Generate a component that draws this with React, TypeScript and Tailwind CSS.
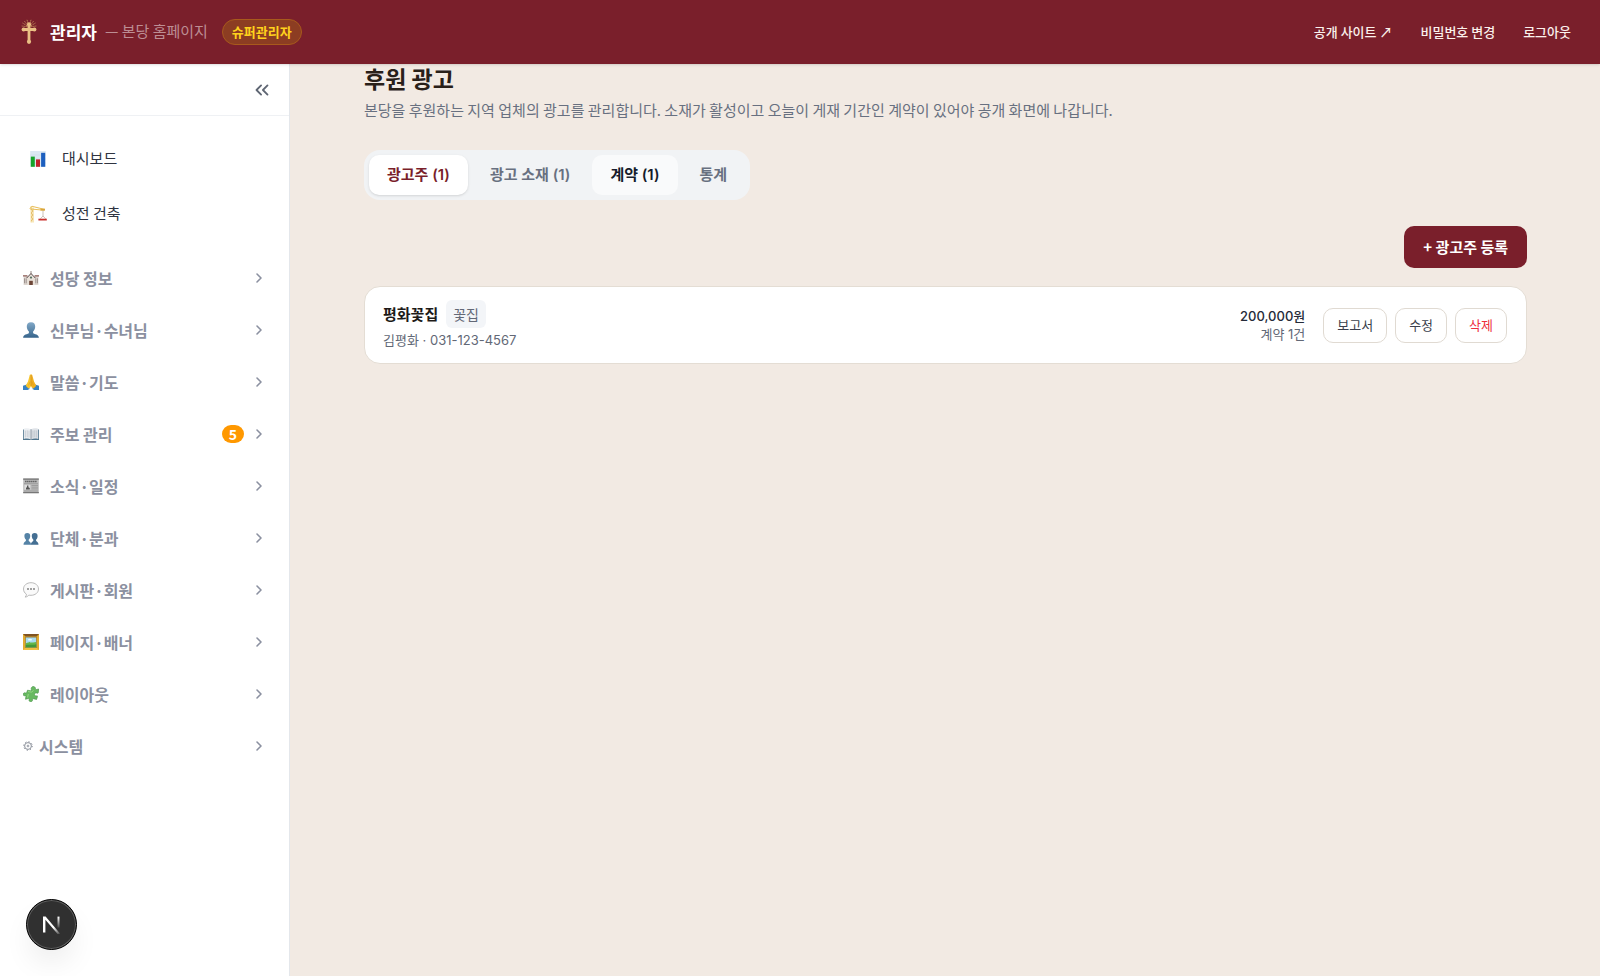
import React, { useState } from 'react';
import { ChevronRight, ChevronsLeft } from 'lucide-react';

const ChartIcon = () => (
    <svg viewBox="0 0 16 16" className="size-4" aria-hidden="true">
        <rect x="0.2" y="0" width="15.6" height="15.8" fill="#dce8f2" />
        <path d="M0 4h16M0 8h16M0 12h16" stroke="#c2d3e2" strokeWidth="0.4" />
        <rect x="0.8" y="5.6" width="4" height="10.2" fill="#17a32b" />
        <rect x="6" y="8.4" width="4" height="7.4" fill="#c3222c" />
        <rect x="11.1" y="1.8" width="4.1" height="14" fill="#1d5fbf" />
    </svg>
);

const CraneIcon = () => (
    <svg viewBox="0 0 18 18" className="size-[18px]" aria-hidden="true">
        <path d="M2.2 1v16.5M4 2.5v15" stroke="#ecc868" strokeWidth="0.9" fill="none" />
        <path d="M2.2 4l1.8 2-1.8 2 1.8 2-1.8 2 1.8 2-1.8 2" stroke="#dcae4c" strokeWidth="0.7" fill="none" />
        <path d="M0.8 3.6L3 1.3l13 3.2M1 3.9l14.5 1.4" stroke="#e8bd58" strokeWidth="1" fill="none" />
        <rect x="11.5" y="3.7" width="4.5" height="1.8" fill="#d9a53d" />
        <path d="M14 5.5v5.5M11.3 13.8l2.7-2.8 2.7 2.8" stroke="#b6a89a" strokeWidth="0.7" fill="none" />
        <rect x="9.4" y="13.7" width="8.4" height="1.8" fill="#c9302c" />
    </svg>
);

const ChurchIcon = () => (
    <svg viewBox="0 0 16 16" className="size-4" aria-hidden="true">
        <path d="M8 1v4" stroke="#8a7a72" strokeWidth="0.9" />
        <rect x="0.6" y="6.4" width="14.8" height="8.6" fill="#ddd5cf" />
        <path d="M0 5.2h4.4v1.400H0zM11.600 5.200H16v1.400h-4.400z" fill="#8a5850" />
        <path d="M4.2 7.8L8 3.6l3.8 4.2V15H4.2z" fill="#e9e1d9" />
        <path d="M3.7 8L8 3.5 12.3 8" stroke="#58484a" strokeWidth="1" fill="none" />
        <circle cx="8" cy="7.6" r="1.1" fill="#557263" />
        <rect x="6.2" y="10.8" width="3.6" height="4.2" fill="#6d4637" />
        <path d="M1.5 8.3v5M3.2 8.3v5M12.8 8.3v5M14.5 8.3v5" stroke="#8f8480" strokeWidth="0.8" />
    </svg>
);

const PersonIcon = () => (
    <svg viewBox="0 0 16 16" className="size-4" aria-hidden="true">
        <defs>
            <linearGradient id="bust" x1="0" y1="0" x2="0" y2="1">
                <stop offset="0" stopColor="#82a9c8" />
                <stop offset="1" stopColor="#36648b" />
            </linearGradient>
        </defs>
        <path d="M8 .2C4.900.2 3.700 2.100 3.800 4.600c0 2 .8 3.900 2.100 4.900v1.800C4.200 12.300.5 12.300.1 15.800h15.800c-.4-3.500-4.100-3.500-5.800-4.500V9.500c1.300-1 2.100-2.900 2.100-4.900C12.300 2.100 11.100.2 8 .2z" fill="url(#bust)" />
    </svg>
);

const PrayIcon = () => (
    <svg viewBox="0 0 16 16" className="size-4" aria-hidden="true">
        <path d="M0 11.8l4.6-1.600 2 4.800-2 1H0zM16 11.800l-4.600-1.600-2 4.800 2 1H16z" fill="#3681c4" />
        <path d="M7.900.3C7 .3 6.700 1 6.500 2L5 7.500 2.700 11.700l2.700 2.900c1.500-.4 2.500-1.500 2.600-3z" fill="#f8c52d" />
        <path d="M8.100.3c.9 0 1.200.7 1.400 1.700L11 7.500l2.300 4.200-2.700 2.900c-1.500-.4-2.500-1.500-2.600-3z" fill="#f2b01e" />
        <path d="M8 1v11" stroke="#c87c14" strokeWidth="0.6" />
        <path d="M5.500 11.500l1.700-4M10.500 11.500l-1.700-4" stroke="#dd961b" strokeWidth="0.6" />
    </svg>
);

const BookIcon = () => (
    <svg viewBox="0 0 16 16" className="size-4" aria-hidden="true">
        <path d="M0 3.500h16V14H0z" fill="#50758d" />
        <path d="M.8 2.800C3.500 2 6.200 2.200 8 3.500v9.900c-2-1-4.700-1-7.200-.5z" fill="#edf0f3" />
        <path d="M15.200 2.800C12.500 2 9.800 2.200 8 3.500v9.900c2-1 4.700-1 7.200-.5z" fill="#dfe3e8" />
        <path d="M8 3.500v10" stroke="#75828e" strokeWidth="0.8" />
        <path d="M2.300 4.500v7M4.200 4.300v7M6 4.600v7M10 4.600v7M11.800 4.300v7M13.700 4.500v7" stroke="#b5bbc4" strokeWidth="0.7" />
    </svg>
);

const NewsIcon = () => (
    <svg viewBox="0 0 16 16" className="size-4" aria-hidden="true">
        <rect x="0.2" y="0.5" width="15.6" height="14.7" fill="#bcbcbc" />
        <rect x="0.2" y="0.5" width="15.6" height="1.3" fill="#777" />
        <path d="M2 3.600h12" stroke="#666" strokeWidth="1.5" strokeDasharray="1.5 .4" />
        <path d="M1 5.700h14M8.500 7.500H15M8.500 9.200H15M8.500 10.900H15M1 13h14" stroke="#888" strokeWidth="0.6" />
        <rect x="1.5" y="6.8" width="5.8" height="4.8" fill="#dedede" />
        <path d="M3 11.500V9.800l1-.5V7.600h1.400v1.700l1.400.8v1.400z" fill="#555" />
        <path d="M.2 14h15.600v1.200H.2z" fill="#777" />
    </svg>
);

const PeopleIcon = () => (
    <svg viewBox="0 0 16 16" className="size-4" aria-hidden="true">
        <path d="M4.300 3C2.300 3 1.300 4.100 1.400 5.900c0 1.600.5 2.800 1.500 3.500v1.500C2 11.600.5 12 .5 14.800h7.600c0-2.800-1.500-3.200-2.400-3.900V9.400c1-.7 1.500-1.900 1.500-3.500C7.300 4.100 6.300 3 4.300 3z" fill="#5583a6" />
        <path d="M11.700 3c-2 0-3 1.100-2.900 2.900 0 1.600.5 2.800 1.500 3.500v1.500c-.9.7-2.400 1.100-2.400 3.900h7.600c0-2.800-1.500-3.200-2.400-3.900V9.400c1-.7 1.500-1.900 1.500-3.500.1-1.800-.9-2.900-2.900-2.900z" fill="#446f93" />
    </svg>
);

const SpeechIcon = () => (
    <svg viewBox="0 0 16 16" className="size-4" aria-hidden="true">
        <path d="M8 .7c4.300 0 7.500 2.700 7.500 6.300S12.300 13.300 8 13.300c-.8 0-1.500 0-2.200-.2-.7 1-2 1.900-3.600 2 .8-.8 1.200-1.700 1.200-2.900C1.600 11 .5 9.200.5 7 .5 3.400 3.700.7 8 .7z" fill="#fafafa" stroke="#aaa" strokeWidth="0.8" />
        <path d="M4.200 7h1.600M7.200 7h1.600M10.200 7h1.600" stroke="#666" strokeWidth="1.4" />
    </svg>
);

const FrameIcon = () => (
    <svg viewBox="0 0 16 16" className="size-4" aria-hidden="true">
        <rect width="16" height="16" fill="#e1ab2d" />
        <path d="M0 0h16l-2 2H2z" fill="#805322" />
        <path d="M0 16h16l-2-2H2z" fill="#efc043" />
        <rect x="2.2" y="2.2" width="11.6" height="11.6" fill="#9b722c" />
        <rect x="2.8" y="3.5" width="10.4" height="9.7" fill="#a8dcf0" />
        <ellipse cx="7" cy="5.7" rx="2" ry="0.9" fill="#eefaff" />
        <path d="M2.800 9.300c3-1.500 6-.3 10.400-1.300v5.200H2.800z" fill="#65b749" />
        <path d="M2.800 11c3-1 6 .5 10.400-.7v2.900H2.800z" fill="#42983a" />
    </svg>
);

const PuzzleIcon = () => (
    <svg viewBox="0 0 16 16" className="size-4" aria-hidden="true">
        <path
            d="M4.500 4.200l3.300.6c.7 0 .7-.6.5-1.200C7.800 2.200 8.500.8 10 .5c1.400-.2 2.500.8 2.500 2.200 0 .8.300 1.100 1 .8l2.200-.5-.4 3.600c-.2.800-.9.700-1.600.4-1.200-.4-2.200.3-2.200 1.500 0 1.100 1 1.700 2 1.400.7-.3 1.200-.1 1 .6l-.9 3-3.300-.8c-.8-.1-.9.4-.8 1.100.2 1.300-.8 2-1.900 1.900-1.200-.1-1.900-1.100-1.500-2.200.3-.8 0-1.200-.8-1l-2.800.8.4-2.900c.1-.7-.4-.9-1.100-.7C.8 10 0 9.200.2 8.100c.2-1 1.200-1.600 2.200-1.200.7.200 1.200.1 1.400-.6z"
            fill="#68b961"
            stroke="#458f47"
            strokeWidth="0.6"
        />
        <path d="M5 5.500l3.500.6 2-1.600M4.600 11.500l.7-3.500" stroke="#9bdb89" strokeWidth="0.9" fill="none" />
    </svg>
);

const GearIcon = () => (
    <svg viewBox="0 0 10 10" className="size-[10px]" fill="none" stroke="#7f8490" aria-hidden="true">
        <circle cx="5" cy="5" r="3.4" strokeWidth="0.9" />
        <circle cx="5" cy="5" r="4.3" strokeWidth="1" strokeDasharray="1.2 2.177" />
        <circle cx="5" cy="5" r="0.9" strokeWidth="0.8" />
    </svg>
);

const CrossLogo = () => (
    <svg viewBox="0 0 18 26" className="h-[26px] w-[18px]" aria-hidden="true">
        <path d="M9 8L2.500 4M9 8L4.500 2.200M9 8L7 .8M9 8L11 .8M9 8l4.500-5.800M9 8l6.500-4M9 8L1.700 7M9 8l7.300-1" stroke="#c08b5a" strokeWidth="0.9" strokeDasharray="1.5 .6" />
        <path d="M9 5v18M3.500 10.500h11" stroke="#eac085" strokeWidth="2.8" />
        <circle cx="9" cy="5.2" r="2" fill="#eac085" />
        <circle cx="3.6" cy="10.5" r="2" fill="#eac085" />
        <circle cx="14.4" cy="10.5" r="2" fill="#eac085" />
        <circle cx="9" cy="22.8" r="2.1" fill="#eac085" />
    </svg>
);

interface MenuGroup {
    label: string;
    icon: React.ReactNode;
    badge?: number;
}

const links = [
    { label: '대시보드', icon: <ChartIcon /> },
    { label: '성전 건축', icon: <CraneIcon /> },
];

const groups: MenuGroup[] = [
    { label: '성당 정보', icon: <ChurchIcon /> },
    { label: '신부님·수녀님', icon: <PersonIcon /> },
    { label: '말씀·기도', icon: <PrayIcon /> },
    { label: '주보 관리', icon: <BookIcon />, badge: 5 },
    { label: '소식·일정', icon: <NewsIcon /> },
    { label: '단체·분과', icon: <PeopleIcon /> },
    { label: '게시판·회원', icon: <SpeechIcon /> },
    { label: '페이지·배너', icon: <FrameIcon /> },
    { label: '레이아웃', icon: <PuzzleIcon /> },
    { label: '시스템', icon: <GearIcon /> },
];

const tabs = ['광고주 (1)', '광고 소재 (1)', '계약 (1)', '통계'];

const Header = () => (
    <header className="relative z-10 flex h-16 items-center justify-between bg-[#7a1f2b] pr-[29px] pb-px pl-5 text-white shadow-sm">
        <div className="flex items-center">
            <CrossLogo />
            <span className="ml-3 text-[17px] font-bold">관리자</span>
            <span className="ml-2 text-[15px] text-[#bd8e94]">— 본당 홈페이지</span>
            <span className="ml-3.5 flex h-[26px] items-center rounded-full border border-[#a85a1c] bg-[#8c3d22] px-[9px] text-[13px] font-bold text-[#ffd21c]">슈퍼관리자</span>
        </div>
        <nav className="flex gap-7 text-[13px] font-medium text-[#fbf1ec]">
            <a href="#site">공개 사이트 ↗</a>
            <a href="#password">비밀번호 변경</a>
            <button>로그아웃</button>
        </nav>
    </header>
);

const Sidebar = () => (
    <aside className="relative w-[290px] shrink-0 border-r border-[#e4e7eb] bg-white">
        <div className="flex h-[52px] items-center justify-end border-b border-[#eff1f4] pr-4">
            <button aria-label="메뉴 접기" className="text-[#5f6673]">
                <ChevronsLeft className="size-[22px]" strokeWidth={2} />
            </button>
        </div>
        <nav className="pt-[15px]">
            {links.map((link) => (
                <a key={link.label} href="#menu" className="flex h-[55px] items-center gap-[14px] pl-7 text-[15px] text-[#2f3441]">
                    <span className="flex w-5 justify-center">{link.icon}</span>
                    {link.label}
                </a>
            ))}
            <div className="pt-[11px]">
                {groups.map((group) => (
                    <button key={group.label} className="flex h-[52px] w-full items-center gap-[11px] pr-[22px] pl-[23px] text-[#8b90a0] last:gap-1.5">
                        {group.icon}
                        <span className="text-base font-bold">{group.label}</span>
                        <span className="ml-auto flex items-center gap-[7px]">
                            {group.badge && (
                                <span className="flex h-[18px] items-center rounded-full bg-[#ff9800] px-[7px] text-sm font-bold text-white">{group.badge}</span>
                            )}
                            <ChevronRight className="size-4" strokeWidth={2.4} />
                        </span>
                    </button>
                ))}
            </div>
        </nav>
        <button aria-label="Next.js" className="absolute bottom-[26px] left-[26px] flex size-[51px] items-center justify-center rounded-full border border-black bg-[#303030] shadow-[inset_0_0_0_1px_#606060,0_16px_32px_-8px_rgba(0,0,0,0.12)]">
            <svg viewBox="0 0 18 18" className="size-[18px]" fill="none" aria-hidden="true">
                <defs>
                    <linearGradient id="diag" x1="11" y1="11" x2="17" y2="18" gradientUnits="userSpaceOnUse">
                        <stop stopColor="#fff" />
                        <stop offset="1" stopColor="#fff" stopOpacity="0.1" />
                    </linearGradient>
                    <linearGradient id="stem" x1="15" y1="1" x2="15" y2="12" gradientUnits="userSpaceOnUse">
                        <stop stopColor="#fff" />
                        <stop offset="1" stopColor="#fff" stopOpacity="0.1" />
                    </linearGradient>
                </defs>
                <path d="M0 .6h2.600L17 17.600l-1.600 1.300L2.400 3.800V16.500H0z" fill="url(#diag)" />
                <path d="M15.500 .6v11" stroke="url(#stem)" strokeWidth="2" />
            </svg>
        </button>
    </aside>
);

const AdvertiserCard = () => (
    <article className="mt-[18px] flex items-center justify-between rounded-2xl border border-[#e4ddd4] bg-white py-2.5 pr-[19px] pl-[18px]">
        <div className="pt-[3px]">
            <div className="flex items-center gap-2">
                <h2 className="text-[15px] font-bold text-[#1d1a18]">평화꽃집</h2>
                <span className="rounded-md bg-[#f3f5f8] px-[7px] text-sm leading-7 text-[#626876]">꽃집</span>
            </div>
            <p className="font-['Inter','Noto_Sans_CJK_KR',sans-serif] text-[13px] leading-[25px] text-[#626876]">김평화 · 031-123-4567</p>
        </div>
        <div className="flex items-center gap-2 text-[13px] text-[#3a3f4c]">
            <div className="mr-2.5 text-right font-['Inter','Noto_Sans_CJK_KR',sans-serif] leading-[18px]">
                <p className="font-medium text-[#252b39]">200,000원</p>
                <p className="text-[#626876]">계약 1건</p>
            </div>
            <button className="h-[35px] rounded-[10px] border border-[#e0dad2] px-[13px]">보고서</button>
            <button className="h-[35px] rounded-[10px] border border-[#e0dad2] px-[13px]">수정</button>
            <button className="h-[35px] rounded-[10px] border border-[#e0dad2] px-[13px] text-[#ed2f3d]">삭제</button>
        </div>
    </article>
);

export default function App() {
    const [activeTab, setActiveTab] = useState(tabs[0]);

    const tabStyle = (tab: string) => {
        if (tab === activeTab) return 'bg-white text-[#7a1f2b] shadow-sm';
        if (tab === '계약 (1)') return 'bg-[#f9fafb] text-[#151c2b]';
        return 'text-[#687080]';
    };

    return (
        <div className="flex min-h-screen flex-col bg-[#f2eae3] font-['Noto_Sans_CJK_KR',sans-serif]">
            <Header />
            <div className="flex flex-1">
                <Sidebar />
                <main className="min-w-0 flex-1 pr-[73px] pl-[74px]">
                    <h1 className="text-[23px] leading-7 font-bold text-[#292019]">후원 광고</h1>
                    <p className="mt-1.5 text-[15px] leading-6 text-[#687080]">
                        본당을 후원하는 지역 업체의 광고를 관리합니다. 소재가 활성이고 오늘이 게재 기간인 계약이 있어야 공개 화면에 나갑니다.
                    </p>
                    <div role="tablist" className="mt-7 flex w-fit gap-1 rounded-2xl bg-[#f1f3f5] p-[5px] font-['Inter','Noto_Sans_CJK_KR',sans-serif]">
                        {tabs.map((tab) => (
                            <button
                                key={tab}
                                role="tab"
                                aria-selected={tab === activeTab}
                                onClick={() => setActiveTab(tab)}
                                className={`h-10 rounded-[10px] px-[18px] text-[15px] font-semibold ${tabStyle(tab)}`}
                            >
                                {tab}
                            </button>
                        ))}
                    </div>
                    <div className="mt-[26px] flex justify-end">
                        <button className="h-[42px] rounded-[10px] bg-[#7a1f2b] px-[19px] text-[15px] font-semibold text-white">+ 광고주 등록</button>
                    </div>
                    <AdvertiserCard />
                </main>
            </div>
        </div>
    );
}
